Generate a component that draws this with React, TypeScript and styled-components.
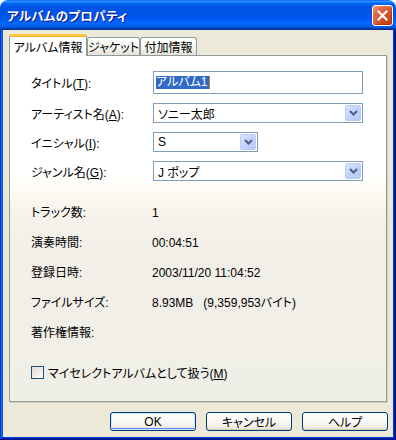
import styled, { createGlobalStyle } from 'styled-components';

const GlobalStyle = createGlobalStyle`
  html, body {
    margin: 0;
    padding: 0;
    background: #ffffff;
  }
  body {
    font-family: "Liberation Sans", "Noto Sans CJK JP", sans-serif;
    font-size: 12px;
    font-feature-settings: "palt";
    color: #000000;
  }
`;

const formRows = [
  { label: 'タイトル', key: 'T', kind: 'input', value: 'アルバム1' },
  { label: 'アーティスト名', key: 'A', kind: 'combo', value: 'ソニー太郎', width: 210 },
  { label: 'イニシャル', key: 'I', kind: 'combo', value: 'S', width: 105 },
  { label: 'ジャンル名', key: 'G', kind: 'combo', value: 'J ポップ', width: 210 },
];

const infoRows = [
  { label: 'トラック数:', value: '1' },
  { label: '演奏時間:', value: '00:04:51' },
  { label: '登録日時:', value: '2003/11/20 11:04:52' },
  { label: 'ファイルサイズ:', value: '8.93MB', sub: '(9,359,953バイト)' },
  { label: '著作権情報:', value: '' },
];

const tabs = [
  { label: 'アルバム情報', width: 78 },
  { label: 'ジャケット', width: 53 },
  { label: '付加情報', width: 57 },
];

function ChevronDown() {
  return (
    <svg width="9" height="6" viewBox="0 0 9 6">
      <polyline points="1,1 4.5,4.5 8,1" fill="none" stroke="#4D6185" strokeWidth="2" />
    </svg>
  );
}

function CloseIcon() {
  return (
    <svg width="11" height="11" viewBox="0 0 11 11">
      <path d="M1.5 1.5 L9.5 9.5 M9.5 1.5 L1.5 9.5" stroke="#ffffff" strokeWidth="2.2" strokeLinecap="square" />
    </svg>
  );
}

export default function App() {
  return (
    <>
      <GlobalStyle />
      <Window>
        <TitleBar>
          <Title>アルバムのプロパティ</Title>
          <CloseButton>
            <CloseIcon />
          </CloseButton>
        </TitleBar>
        <Frame>
          <TabStrip>
            {tabs.map((t, i) => (
              <Tab key={t.label} $active={i === 0} $width={t.width}>
                {t.label}
              </Tab>
            ))}
          </TabStrip>
          <Panel>
            <FormGrid>
              {formRows.map(row => (
                <FormRow key={row.key}>
                  <Label>
                    {row.label}(<u>{row.key}</u>):
                  </Label>
                  {row.kind === 'input' ? (
                    <TextBox>
                      <Selected>{row.value}</Selected>
                      <Caret />
                    </TextBox>
                  ) : (
                    <Combo $width={row.width}>
                      <ComboText>{row.value}</ComboText>
                      <DropButton>
                        <ChevronDown />
                      </DropButton>
                    </Combo>
                  )}
                </FormRow>
              ))}
            </FormGrid>

            <InfoList>
              {infoRows.map(row => (
                <InfoRow key={row.label}>
                  <Label>{row.label}</Label>
                  <span>
                    {row.value}
                    {row.sub && <Sub>{row.sub}</Sub>}
                  </span>
                </InfoRow>
              ))}
            </InfoList>

            <CheckRow>
              <CheckBox />
              <span>
                マイセレクトアルバムとして扱う(<u>M</u>)
              </span>
            </CheckRow>
          </Panel>
          <ButtonRow>
            <Button $default>OK</Button>
            <Button>キャンセル</Button>
            <Button>ヘルプ</Button>
          </ButtonRow>
        </Frame>
      </Window>
    </>
  );
}

const Window = styled.div`
  width: 396px;
  height: 440px;
  display: flex;
  flex-direction: column;
`;

const TitleBar = styled.div`
  height: 30px;
  flex-shrink: 0;
  display: flex;
  align-items: center;
  justify-content: space-between;
  padding: 0 3px 0 7px;
  border-radius: 8px 8px 0 0;
  box-sizing: border-box;
  background: linear-gradient(
    180deg,
    #0058ee 0%,
    #3593ff 4%,
    #288eff 6%,
    #127dff 8%,
    #036ffc 10%,
    #0262ee 14%,
    #0057e5 20%,
    #0054e3 24%,
    #0055eb 56%,
    #005bf5 66%,
    #026afe 76%,
    #0062ef 86%,
    #0052d6 92%,
    #0040ab 94%,
    #003092 100%
  );
`;

const Title = styled.div`
  color: #ffffff;
  font-weight: bold;
  font-size: 12.5px;
  letter-spacing: 0.3px;
  text-shadow: 1px 1px 0 #0f1089;
`;

const CloseButton = styled.div`
  width: 21px;
  height: 21px;
  box-sizing: border-box;
  border: 1px solid #ffffff;
  border-radius: 3px;
  display: flex;
  align-items: center;
  justify-content: center;
  background: radial-gradient(circle at 85% 85%, #c44112 0%, #d8532a 45%, #e2704c 75%, #f0a58c 100%);
  box-shadow: inset -1px -1px 1px rgba(120, 20, 0, 0.4);
`;

const Frame = styled.div`
  flex: 1;
  display: flex;
  flex-direction: column;
  padding: 4px 9px 0 9px;
  background: #ece9d8;
  box-shadow: inset -1px -1px #00138c, inset 1px 0 #0831d9, inset -2px -2px #001ea0,
    inset 2px 0 #166aee, inset -3px -3px #003bda, inset 3px 0 #0855dd;
`;

const TabStrip = styled.div`
  display: flex;
  align-items: flex-end;
  height: 21px;
  position: relative;
  z-index: 1;
`;

const Tab = styled.div<{ $active?: boolean; $width: number }>`
  width: ${({ $width }) => $width}px;
  box-sizing: border-box;
  display: flex;
  align-items: center;
  justify-content: center;
  border: 1px solid #919b9c;
  border-bottom: none;
  border-radius: 3px 3px 0 0;
  height: ${({ $active }) => ($active ? '22px' : '18px')};
  margin-bottom: ${({ $active }) => ($active ? '-1px' : '0')};
  background: ${({ $active }) =>
    $active ? '#ffffff' : 'linear-gradient(180deg, #ffffff 0%, #f4f3ee 60%, #e3e1d8 100%)'};
  border-top: ${({ $active }) => ($active ? '2px solid #ffc83c' : '1px solid #919b9c')};
  box-shadow: ${({ $active }) => ($active ? 'inset 0 1px 0 #f0b040' : 'none')};
  padding-top: ${({ $active }) => ($active ? '1px' : '0')};
`;

const Panel = styled.div`
  height: 347px;
  box-sizing: border-box;
  border: 1px solid #919b9c;
  box-shadow: 1px 1px 0 #d0cebf;
  padding: 15px 22px 0 21px;
  background: linear-gradient(
    180deg,
    #ffffff 0px,
    #ffffff 118px,
    #fdfaf2 135px,
    #f8f3ec 155px,
    #f4f1ea 175px,
    #f1efe8 205px,
    #efeee7 100%
  );
`;

const FormGrid = styled.div`
  display: flex;
  flex-direction: column;
  gap: 9px;
`;

const FormRow = styled.div`
  display: grid;
  grid-template-columns: 122px 1fr;
  align-items: center;
`;

const Label = styled.span`
  white-space: nowrap;
`;

const TextBox = styled.div`
  height: 23px;
  width: 210px;
  box-sizing: border-box;
  border: 1px solid #7f9db9;
  background: #ffffff;
  display: flex;
  align-items: center;
  padding-left: 2px;
`;

const Selected = styled.span`
  background: #316ac5;
  color: #ffffff;
  line-height: 13px;
  padding-right: 1px;
`;

const Caret = styled.span`
  width: 1px;
  height: 13px;
  background: #c08040;
`;

const Combo = styled.div<{ $width?: number }>`
  height: 20px;
  width: ${({ $width }) => $width}px;
  box-sizing: border-box;
  border: 1px solid #7f9db9;
  background: #ffffff;
  display: flex;
  align-items: stretch;
  padding: 1px;
`;

const ComboText = styled.span`
  flex: 1;
  display: flex;
  align-items: center;
  padding-left: 3px;
`;

const DropButton = styled.div`
  width: 16px;
  box-sizing: border-box;
  border: 1px solid #b9cdf7;
  border-radius: 2px;
  background: linear-gradient(135deg, #dbe6fd 0%, #c1d3fb 50%, #b2c8f8 100%);
  display: flex;
  align-items: center;
  justify-content: center;
`;

const InfoList = styled.div`
  display: flex;
  flex-direction: column;
  gap: 14px;
  margin-top: 24px;
`;

const InfoRow = styled.div`
  display: grid;
  grid-template-columns: 121px 1fr;
  line-height: 16px;
  height: 16px;
`;

const Sub = styled.span`
  margin-left: 10px;
`;

const CheckRow = styled.div`
  display: flex;
  align-items: center;
  gap: 4px;
  margin-top: 23px;
`;

const CheckBox = styled.div`
  width: 13px;
  height: 13px;
  box-sizing: border-box;
  border: 1px solid #1c5180;
  background: linear-gradient(135deg, #dcdbd5 0%, #f0efea 60%, #ffffff 100%);
`;

const ButtonRow = styled.div`
  display: flex;
  justify-content: flex-end;
  gap: 10px;
  margin-top: 10px;
  margin-right: -1px;
`;

const Button = styled.div<{ $default?: boolean }>`
  width: 86px;
  height: 19px;
  box-sizing: border-box;
  border: 1px solid #003c74;
  border-radius: 3px;
  display: flex;
  align-items: center;
  justify-content: center;
  background: linear-gradient(180deg, #ffffff 0%, #f4f3ee 70%, #e3e1d8 100%);
  box-shadow: ${({ $default }) =>
    $default ? 'inset 0 0 0 1px #cee7ff, inset 0 -1px 0 1px #6982ee' : 'inset 0 -1px 0 #d6d0c5'};
`;
